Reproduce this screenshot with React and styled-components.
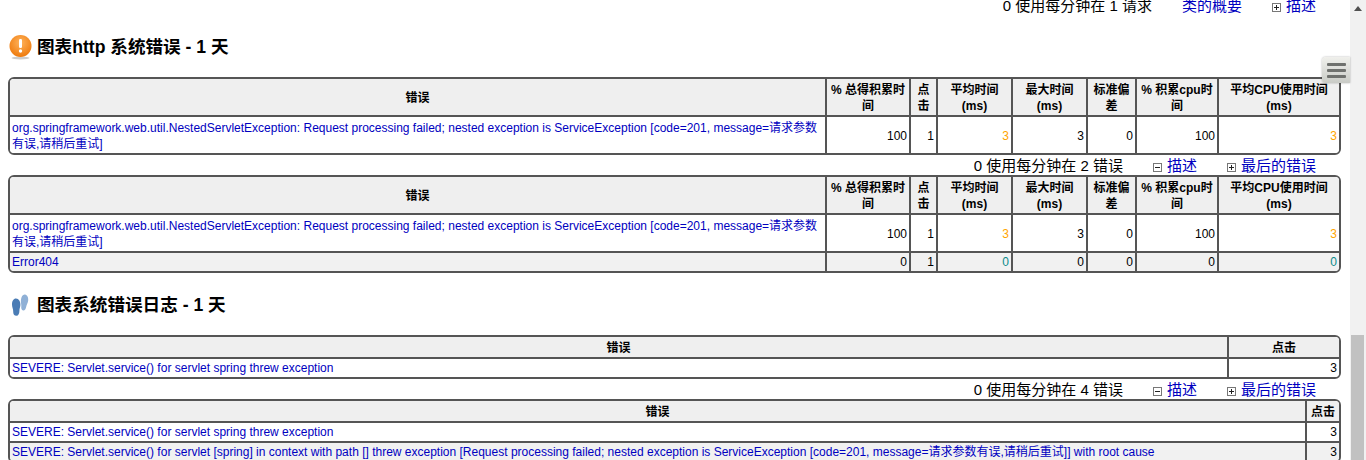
import React from 'react';
import styled, { createGlobalStyle } from 'styled-components';

const GlobalStyle = createGlobalStyle`
  html, body {
    margin: 0;
    padding: 0;
    background: #fff;
    overflow: hidden;
  }
  body {
    font-family: "Liberation Sans", "Noto Sans CJK SC", sans-serif;
    color: #000;
  }
`;

const Page = styled.div`
  position: relative;
  display: flex;
  width: 1366px;
  height: 460px;
  overflow: hidden;
`;

const Content = styled.main`
  flex: 1;
  min-width: 0;
  margin-top: -5px;
  padding: 0 9px 0 8px;
`;

const Scrollbar = styled.aside`
  position: relative;
  width: 16px;
  background: #f1f1f1;
`;

const ScrollArrow = styled.span`
  position: absolute;
  top: 6px;
  left: 4px;
  width: 0;
  height: 0;
  border-left: 4px solid transparent;
  border-right: 4px solid transparent;
  border-bottom: 5px solid #505050;
`;

const ScrollThumb = styled.span`
  position: absolute;
  top: 335px;
  bottom: 0;
  left: 1px;
  width: 13px;
  background: #c1c1c1;
`;

const MenuButton = styled.button`
  position: absolute;
  top: 57px;
  left: 1322px;
  display: flex;
  flex-direction: column;
  justify-content: center;
  gap: 3px;
  width: 28px;
  height: 26px;
  padding: 0 4px 0 5px;
  border: 0;
  border-radius: 4px 0 0 4px;
  background: linear-gradient(#f0f0ec, #c9cbc6);
  box-shadow: 0 0 2px rgba(0, 0, 0, 0.35);
`;

const MenuBar = styled.span`
  display: block;
  height: 3px;
  border-radius: 1px;
  background: #6f716e;
`;

const Summary = styled.div`
  display: flex;
  justify-content: flex-end;
  align-items: center;
  gap: 30px;
  box-sizing: border-box;
  height: 20px;
  padding: 1px 25px 0 0;
  font-size: 15px;
  line-height: 19px;
`;

const SummaryLink = styled.a`
  display: flex;
  align-items: center;
  gap: 5px;
  color: #0000c0;
`;

const ToggleBox = styled.svg`
  width: 9px;
  height: 9px;
  margin-top: 3px;
`;

const Heading = styled.h3`
  display: flex;
  align-items: center;
  gap: 5px;
  height: 24px;
  margin: 0;
  padding: ${(p) => p.$top}px 0 18px;
  box-sizing: content-box;
  font-size: 17.6px;
  font-weight: bold;
  line-height: 24px;
`;

const Table = styled.table`
  width: 1333px;
  table-layout: fixed;
  border-collapse: separate;
  border-spacing: 0;
  border: 2px solid #555;
  border-radius: 6px;
  font-size: 12px;
  line-height: 16px;
  overflow: hidden;
`;

const Col = styled.col`
  width: ${(p) => p.$w}px;
`;

const Row = styled.tr`
  height: ${(p) => p.$h}px;
  background: ${(p) => (p.$alt ? '#f1f1f1' : '#fff')};
`;

const HeadCell = styled.th`
  box-sizing: border-box;
  padding: 1px 2px 0;
  background: #efefef;
  font-weight: bold;
  text-align: center;
  border-right: 2px solid #555;
  border-bottom: 2px solid #555;
  &:last-child {
    border-right: 0;
  }
`;

const Cell = styled.td`
  box-sizing: border-box;
  padding: ${(p) => (p.$single ? 0 : 1)}px 2px 0;
  text-align: ${(p) => (p.$num ? 'right' : 'left')};
  color: ${(p) => p.$color || '#000'};
  border-right: 2px solid #555;
  border-bottom: 2px solid #555;
  &:last-child {
    border-right: 0;
  }
  tr:last-child > & {
    border-bottom: 0;
  }
`;

const ErrorLink = styled.a`
  color: #0000c0;
`;

const Toggle = ({ open }) => (
  <ToggleBox viewBox="0 0 9 9">
    <rect x="0.5" y="0.5" width="8" height="8" fill="#fff" stroke="#777" />
    <path d={open ? 'M2 4.5h5' : 'M2 4.5h5M4.5 2v5'} stroke="#222" />
  </ToggleBox>
);

const AlertIcon = () => (
  <svg width="24" height="26" viewBox="0 0 24 26">
    <defs>
      <radialGradient id="alert" cx="50%" cy="35%" r="65%">
        <stop offset="0%" stopColor="#ffb35c" />
        <stop offset="100%" stopColor="#ee7a0c" />
      </radialGradient>
    </defs>
    <ellipse cx="12.5" cy="24" rx="9" ry="1.5" fill="#ccc" />
    <circle cx="12.5" cy="12" r="11" fill="url(#alert)" />
    <rect x="11" y="5" width="3" height="9" rx="1.2" fill="#fff" />
    <circle cx="12.5" cy="17" r="1.7" fill="#fff" />
  </svg>
);

const StepsIcon = () => (
  <svg width="24" height="24" viewBox="0 0 24 24">
    <path
      d="M8 5.5c2.8 0 4.6 3 4.4 6.5-.2 2.6-1 3.6-1 6 0 2.6-1 4.8-3 4.8S5 21 5.2 18.4C5.4 16 4 14.5 4 11.5 4 8 5.5 5.5 8 5.5z"
      fill="#4a7cb5"
    />
    <path
      d="M17 1.5c2.2.3 3.5 3 3.2 6-.3 2.8-1.6 4-2 6.2-.4 2.3-1.5 4-3 3.8-1.7-.2-2.2-2-1.9-4.2.2-1.7-.6-3.4-.4-6C13.2 3.6 14.8 1.2 17 1.5z"
      fill="#8fb0d6"
    />
  </svg>
);

const NESTED =
  'org.springframework.web.util.NestedServletException: Request processing failed; nested exception is ServiceException [code=201, message=请求参数有误,请稍后重试]';

const ORANGE = '#ffa500';
const TEAL = '#0a8a8a';

const statCols = [817, 84, 27, 75, 75, 49, 82, 120];
const statHead = ['错误', '% 总得积累时间', '点击', '平均时间 (ms)', '最大时间 (ms)', '标准偏差', '% 积累cpu时间', '平均CPU使用时间 (ms)'];

const StatRow = ({ name, values, h, alt, accent, single }) => (
  <Row $h={h} $alt={alt}>
    <Cell $single={single}>
      <ErrorLink>{name}</ErrorLink>
    </Cell>
    {values.map((v, i) => (
      <Cell key={i} $num $single={single} $color={i === 2 || i === 6 ? accent : undefined}>
        {v}
      </Cell>
    ))}
  </Row>
);

const Head = ({ labels, h }) => (
  <thead>
    <Row $h={h}>
      {labels.map((l) => (
        <HeadCell key={l}>{l}</HeadCell>
      ))}
    </Row>
  </thead>
);

const Cols = ({ widths }) => (
  <colgroup>
    {widths.map((w, i) => (
      <Col key={i} $w={w} />
    ))}
  </colgroup>
);

const HitsTable = ({ cols, rows }) => (
  <Table>
    <Cols widths={cols} />
    <Head labels={['错误', '点击']} h={22} />
    <tbody>
      {rows.map((r, i) => (
        <Row key={i} $h={i === rows.length - 1 ? 18 : 20} $alt={i % 2 === 1}>
          <Cell $single>
            <ErrorLink>{r}</ErrorLink>
          </Cell>
          <Cell $num $single>
            3
          </Cell>
        </Row>
      ))}
    </tbody>
  </Table>
);

const ErrorSummary = ({ text }) => (
  <Summary>
    <span>{text}</span>
    <SummaryLink>
      <Toggle open />
      描述
    </SummaryLink>
    <SummaryLink>
      <Toggle />
      最后的错误
    </SummaryLink>
  </Summary>
);

export default function App() {
  return (
    <Page>
      <GlobalStyle />
      <Content>
        <Summary>
          <span>0 使用每分钟在 1 请求</span>
          <SummaryLink>类的概要</SummaryLink>
          <SummaryLink>
            <Toggle />
            描述
          </SummaryLink>
        </Summary>

        <Heading $top={20}>
          <AlertIcon />
          图表http 系统错误 - 1 天
        </Heading>
        <Table>
          <Cols widths={statCols} />
          <Head labels={statHead} h={38} />
          <tbody>
            <StatRow name={NESTED} h={36} accent={ORANGE} values={[100, 1, 3, 3, 0, 100, 3]} />
          </tbody>
        </Table>

        <ErrorSummary text="0 使用每分钟在 2 错误" />
        <Table>
          <Cols widths={statCols} />
          <Head labels={statHead} h={38} />
          <tbody>
            <StatRow name={NESTED} h={38} accent={ORANGE} values={[100, 1, 3, 3, 0, 100, 3]} />
            <StatRow name="Error404" h={18} alt single accent={TEAL} values={[0, 1, 0, 0, 0, 0, 0]} />
          </tbody>
        </Table>

        <Heading $top={20}>
          <StepsIcon />
          图表系统错误日志 - 1 天
        </Heading>
        <HitsTable cols={[1219, 110]} rows={['SEVERE: Servlet.service() for servlet spring threw exception']} />

        <ErrorSummary text="0 使用每分钟在 4 错误" />
        <HitsTable
          cols={[1297, 32]}
          rows={[
            'SEVERE: Servlet.service() for servlet spring threw exception',
            'SEVERE: Servlet.service() for servlet [spring] in context with path [] threw exception [Request processing failed; nested exception is ServiceException [code=201, message=请求参数有误,请稍后重试]] with root cause',
          ]}
        />
      </Content>
      <Scrollbar>
        <ScrollArrow />
        <ScrollThumb />
      </Scrollbar>
      <MenuButton aria-label="menu">
        <MenuBar />
        <MenuBar />
        <MenuBar />
      </MenuButton>
    </Page>
  );
}
